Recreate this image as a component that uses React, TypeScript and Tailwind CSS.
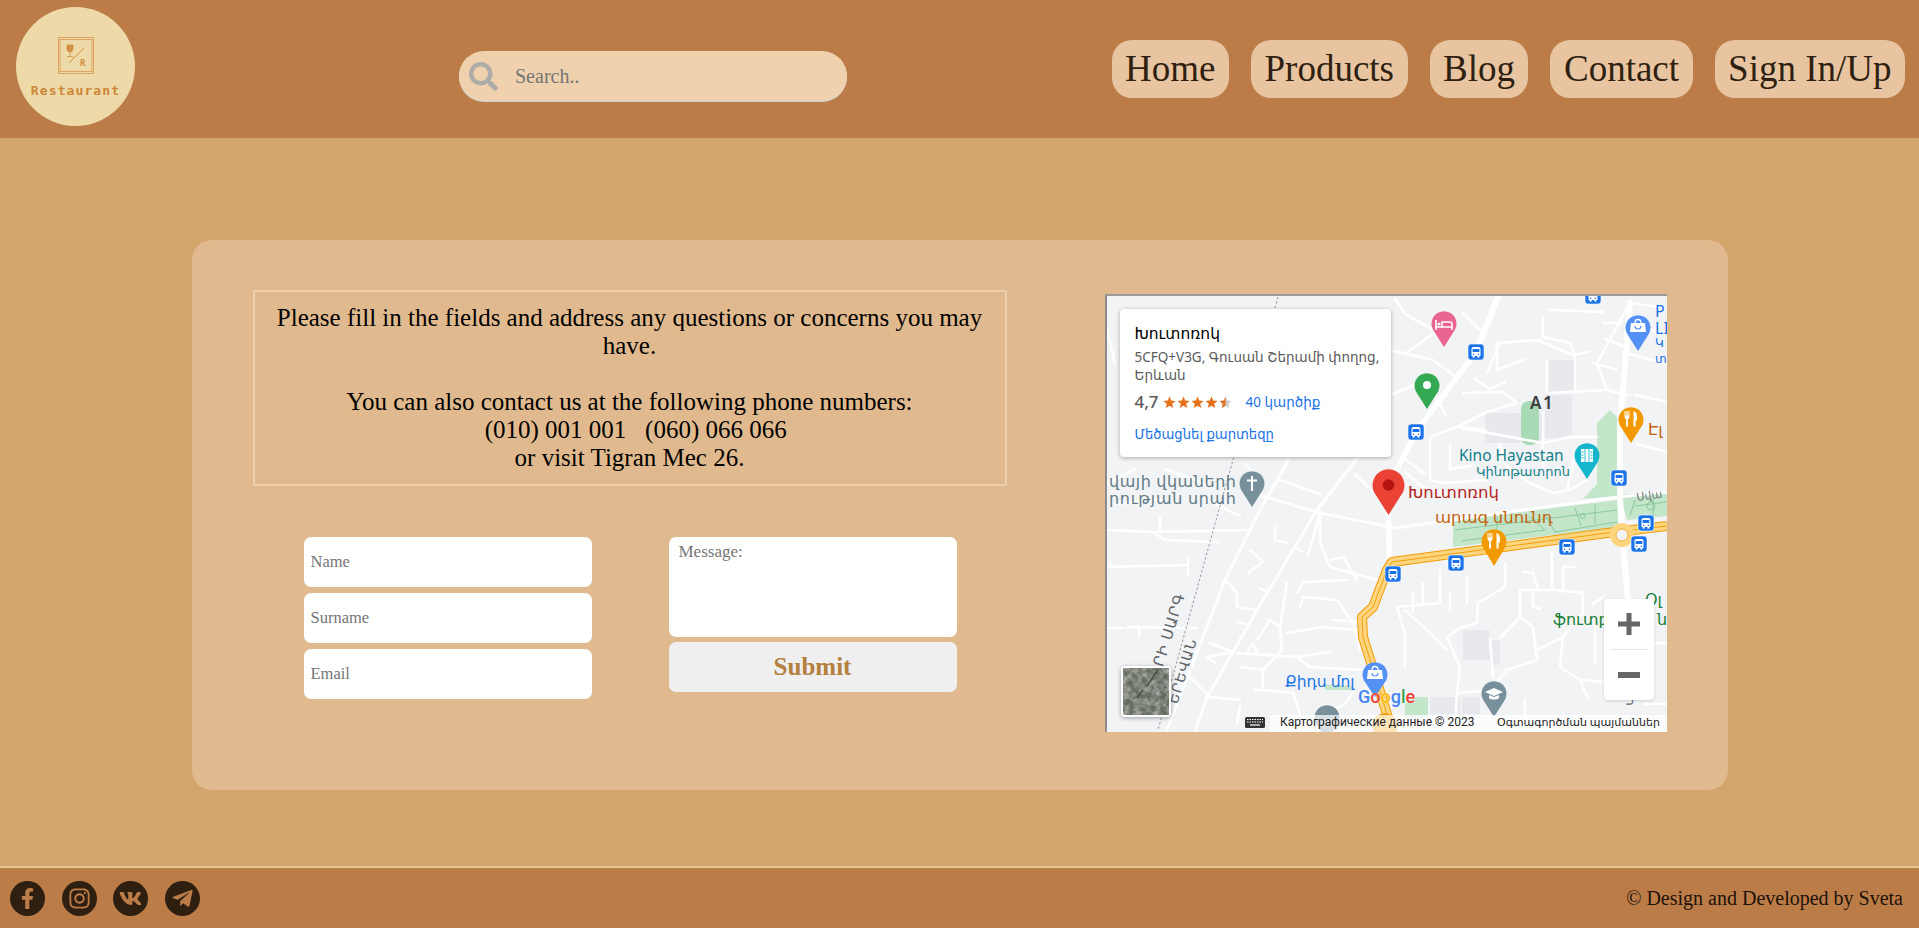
import { FaFacebookF, FaInstagram, FaSearch, FaTelegramPlane, FaVk } from 'react-icons/fa';

const navItems = ['Home', 'Products', 'Blog', 'Contact', 'Sign In/Up'];

// local map coordinates, 562x438 frame
const thinRoads = [
  '2,236 48,238 145,236', '48,238 60,246 113,248', '55,223 55,238', '2,273 83,271', '83,263 83,281', '5,268 5,273',
  '2,334 18,334', '22,333 92,334', '34,334 34,343', '120,286 132,299 132,313 152,316', '133,328 145,331',
  '155,294 162,298', '170,233 170,246 182,249', '192,254 197,258', '145,256 158,268 143,279',
  '105,349 128,358 102,363 110,369', '135,373 158,376', '215,216 215,249 225,273 272,286', '225,266 238,263 252,286',
  '182,289 175,333 177,356 158,376 158,396 188,399 198,429', '192,299 198,288 242,286',
  '195,313 198,303 232,306 248,329 255,356', '182,339 218,333 252,336', '228,326 252,328', '152,346 165,326 175,333',
  '142,359 148,349 152,359', '132,359 192,363 225,358', '192,363 205,373 258,376', '85,383 105,403 135,406',
  '135,412 132,430', '150,396 158,396', '198,429 240,410 250,395',
  '335,276 335,309 292,313', '400,269 400,293 373,309 372,329 355,334 342,343 355,373 352,399',
  '415,296 448,296 478,299 478,319 458,343 432,356', '415,296 415,323 395,344', '415,323 428,333 432,366 402,376',
  '428,299 428,313 435,315', '447,259 447,296', '458,296 458,273 470,273', '418,278 428,279 433,296',
  '458,343 455,373 475,386 482,403', '402,376 385,396 355,399', '475,386 518,389', '532,349 562,349', '385,344 388,383',
  '318,289 318,309', '300,316 322,336 342,356', '292,313 300,340 300,372', '352,399 350,436', '420,405 420,436',
  '488,310 498,303', '490,330 490,370', '540,410 562,410', '362,283 362,309', '345,300 345,316', '308,300 308,318',
  '382,79 395,49 432,46 468,61 483,58', '392,49 392,76 418,66', '438,23 438,43 465,49 470,61 470,96', '445,16 498,18',
  '285,56 328,66 348,81', '358,19 375,36', '358,99 398,98 412,109 382,118 352,133 380,136', '442,66 442,99',
  '442,99 502,96 522,101', '502,96 492,69 525,9', '488,69 512,76', '498,29 515,29', '500,45 518,52',
  '325,143 352,133 438,149 465,143 492,143', '438,119 438,179', '325,143 325,186 338,189 382,186',
  '425,189 448,199 465,196 482,186', '470,160 462,196', '525,9 562,14', '530,101 562,108', '532,150 562,158 562,190',
  '215,219 291,234', '150,200 215,219', '215,219 203,262', '250,180 270,200', '2,190 30,175', '60,175 100,190',
  '10,210 60,205', '100,205 135,222', '300,165 320,180', '140,170 150,180', '172,185 215,200', '2,35 10,70',
  '290,5 300,20 345,45', '300,60 335,35', '288,100 330,82', '330,100 340,120', '400,170 425,189',
  '370,85 385,95 400,88', '345,150 345,175 365,172', '300,178 320,195', '395,150 400,170', '525,60 562,70', '535,30 555,40',
];
const majorRoads = ['395,-2 371,58 311,138 292,176', '283,215 285,275', '525,9 515,132 515,204 518,250 523,306'];
const longRoads = ['184,165 155,216 120,286 62,436', '253,163 212,216 152,316 102,403 90,438', '291,234 513,203 562,198'];

const buildings = [
  'M442 66h28v32h-28z', 'M380 119h58v30h-58z', 'M440 101h27v43h-27z', 'M358 336h27v30h-27z', 'M385 346h10v25h-10z',
  'M325 403h30v17h-30z', 'M357 403h18v17h-18z',
];

const busStops = [
  [371, 58], [311, 138], [514, 184], [488, 2], [541, 229], [534, 250], [462, 253], [351, 269], [288, 280],
];

function Pin({ x, top, tip, r, fill, children }: { x: number; top: number; tip: number; r: number; fill: string; children?: React.ReactNode }) {
  return (
    <g>
      <path d={`M${x} ${tip}L${x - r * 0.9} ${top + r * 1.45}A${r} ${r} 0 1 1 ${x + r * 0.9} ${top + r * 1.45}Z`} fill={fill} />
      {children}
    </g>
  );
}

function Bus({ x, y }: { x: number; y: number }) {
  return (
    <g transform={`translate(${x - 8} ${y - 8})`}>
      <rect width="16" height="16" rx="3" fill="#1a73e8" stroke="#fff" strokeWidth="0.6" />
      <path d="M3.5 5a2 2 0 0 1 2-2h5a2 2 0 0 1 2 2v7h-9z" fill="#fff" />
      <rect x="4.6" y="5" width="6.8" height="3" fill="#1a73e8" />
      <rect x="4.6" y="12" width="2" height="1.6" fill="#fff" />
      <rect x="9.4" y="12" width="2" height="1.6" fill="#fff" />
      <circle cx="5.6" cy="10.2" r="0.8" fill="#1a73e8" />
      <circle cx="10.4" cy="10.2" r="0.8" fill="#1a73e8" />
    </g>
  );
}

function Fork({ x, y }: { x: number; y: number }) {
  return (
    <g fill="#fff" transform={`translate(${x} ${y})`}>
      <path d="M-6.5 -8v5.5c0 1.4.7 2.2 1.6 2.5V7.5h1.8V0c.9-.3 1.6-1.1 1.6-2.5V-8h-1v4.5h-.9V-8h-1.2v4.5h-.9V-8z" />
      <path d="M2.5 -8c2.3.6 3.5 3 3.5 5.5V1.5H4.6V7.5H2.5z" />
    </g>
  );
}

function MapCanvas() {
  return (
    <svg width="562" height="438" viewBox="0 0 562 438" className="block font-['Noto_Sans','DejaVu_Sans',sans-serif]">
      <rect width="562" height="438" fill="#f2f3f5" />
      {buildings.map((d) => (
        <path key={d} d={d} fill="#e8e9ec" />
      ))}
      {/* parks */}
      <rect x="416" y="107" width="18" height="44" rx="8" fill="#a8dab5" />
      <path d="M492 129L505 116L515 126V202L478 205L492 190Z" fill="#c3e6cb" />
      <path d="M348 226L513 206V233L348 253Z" fill="#c3e6cb" />
      <path d="M515 200H562V222L522 226Z" fill="#c3e6cb" />
      <path d="M300 424H323V403H311L300 410Z" fill="#c3e6cb" />
      <path d="M220 396H248V392L220 390Z" fill="#c3e6cb" />
      <g stroke="#7cc296" strokeWidth="0.8" fill="none">
        <path d="M350 236L512 216M356 247L440 236L424 222M392 222V248M440 220L450 238L512 228M470 214L476 232M490 210V230" />
        <circle cx="478" cy="222" r="2.5" />
        <path d="M530 206L525 222M530 212L562 208M548 205V222" />
        <circle cx="546" cy="212" r="4" />
      </g>
      {/* roads */}
      <g fill="none" stroke="#fff" strokeLinejoin="round" strokeLinecap="round">
        {thinRoads.map((p) => (
          <polyline key={p} points={p} strokeWidth="2.6" />
        ))}
        {longRoads.map((p) => (
          <polyline key={p} points={p} strokeWidth="3" />
        ))}
        {majorRoads.map((p) => (
          <polyline key={p} points={p} strokeWidth="6" />
        ))}
      </g>
      <polyline points="173,3 128,166 113,219 53,436" fill="none" stroke="#8a8f94" strokeWidth="0.9" strokeDasharray="2.5 2" />
      {/* highway */}
      <g fill="none" strokeLinejoin="round">
        <polyline points="285,430 258,343 257,323 268,313 282,276 287,268 502,239 562,232" stroke="#f29900" strokeWidth="10" />
        <polyline points="285,430 258,343 257,323 268,313 282,276 287,268 502,239 562,232" stroke="#fdd57e" strokeWidth="8" />
        <polyline points="285,430 258,343 257,323 268,313 282,276 287,268 502,239 562,232" stroke="#f29900" strokeWidth="0.9" />
        <circle cx="517" cy="241" r="9" stroke="#fdd57e" strokeWidth="6" fill="#f2f3f5" />
        <circle cx="517" cy="241" r="6" stroke="#f29900" strokeWidth="0.7" />
      </g>
      {/* labels */}
      <g fontSize="15" fontFamily="'Noto Sans', 'DejaVu Sans', sans-serif">
        <text x="4" y="193" fill="#5f7a86" fontSize="16" textLength="127">վայի վկաների</text>
        <text x="4" y="210" fill="#5f7a86" fontSize="16" textLength="127">րության սրահ</text>
        <text x="425" y="115" fill="#3c4043" fontSize="17" fontWeight="600" letterSpacing="1.5">A1</text>
        <text x="354" y="167" fill="#12808a" fontSize="15.5">Kino Hayastan</text>
        <text x="371" y="182" fill="#12808a" fontSize="13">Կինոթատրոն</text>
        <text x="303" y="204" fill="#b3261e" fontSize="16.5">Խուտոռոկ</text>
        <text x="330" y="229" fill="#c5640f" fontSize="16.5">արագ սնունդ</text>
        <text x="543" y="141" fill="#c5640f" fontSize="16">Էլ</text>
        <text x="550" y="23" fill="#1a73e8" fontSize="16">P</text>
        <text x="550" y="40" fill="#1a73e8" fontSize="16">LI</text>
        <text x="550" y="53" fill="#1a73e8" fontSize="12">Կ</text>
        <text x="550" y="69" fill="#1a73e8" fontSize="12">տ</text>
        <text x="0" y="0" fill="#70757a" fontSize="11" transform="translate(532 207) rotate(-8)">Սվա</text>
        <text x="448" y="331" fill="#188038" fontSize="16">ֆուտբոլ</text>
        <text x="540" y="311" fill="#188038" fontSize="16">Օլ</text>
        <text x="552" y="331" fill="#188038" fontSize="16">ն</text>
        <text x="180" y="393" fill="#1a73e8" fontSize="15.5">Քիդս մոլ</text>
        <text x="0" y="0" fill="#5f6368" fontSize="15" letterSpacing="1" textAnchor="end" transform="translate(80 301) rotate(-73)">ՐԻ ՍԱՐԳ</text>
        <text x="0" y="0" fill="#5f6368" fontSize="14" letterSpacing="1" textAnchor="end" transform="translate(92 346) rotate(-73)">ԵՐԵՎԱՆ</text>
        <text x="0" y="0" fill="#5f6368" fontSize="12" transform="translate(530 412) rotate(-88)">Կ</text>
      </g>
      {busStops.map(([x, y]) => (
        <Bus key={`${x}-${y}`} x={x} y={y} />
      ))}
      {/* pins */}
      <Pin x={339} top={17} tip={53} r={12.5} fill="#ea6491">
        <path d="M331 26v10M331 33h16v3M347 33v-3a2 2 0 0 0-2-2h-8v5" stroke="#fff" strokeWidth="1.6" fill="none" />
        <circle cx="334" cy="30" r="1.6" fill="#fff" />
      </Pin>
      <Pin x={322} top={79} tip={115} r={12.5} fill="#34a853">
        <circle cx="322" cy="91" r="4" fill="#fff" />
      </Pin>
      <Pin x={533} top={21} tip={57} r={12.5} fill="#5491f5">
        <path d="M526 29h14l1 9h-16z" fill="#fff" />
        <path d="M530 29a3 3.5 0 0 1 6 0" stroke="#fff" strokeWidth="1.3" fill="none" />
        <path d="M530 32a3 3 0 0 0 6 0" stroke="#5491f5" strokeWidth="1.2" fill="none" />
      </Pin>
      <Pin x={526} top={113} tip={149} r={12.5} fill="#f29900">
        <Fork x={526} y={125} />
      </Pin>
      <Pin x={482} top={149} tip={185} r={12.5} fill="#12b5cb">
        <rect x="476" y="155" width="12" height="13" fill="#fff" />
        <path d="M480 155v13M484 155v13" stroke="#12b5cb" strokeWidth="0.9" />
        <path d="M476.5 158h2M476.5 161h2M476.5 164h2M485.5 158h2M485.5 161h2M485.5 164h2" stroke="#12b5cb" strokeWidth="1" />
      </Pin>
      <Pin x={147} top={177} tip={213} r={12.5} fill="#78909c">
        <path d="M147 182v15M142 186.5h10" stroke="#fff" strokeWidth="2" />
      </Pin>
      <Pin x={389} top={235} tip={272} r={12.5} fill="#f29900">
        <Fork x={389} y={247} />
      </Pin>
      <Pin x={270} top={368} tip={403} r={12.5} fill="#5491f5">
        <path d="M263 376h14l1 9h-16z" fill="#fff" />
        <path d="M267 376a3 3.5 0 0 1 6 0" stroke="#fff" strokeWidth="1.3" fill="none" />
        <path d="M267 379a3 3 0 0 0 6 0" stroke="#5491f5" strokeWidth="1.2" fill="none" />
      </Pin>
      <Pin x={389} top={387} tip={423} r={12.5} fill="#78909c">
        <path d="M380 398l9-4 9 4-9 4z" fill="#fff" />
        <path d="M384 401v3c2 2 8 2 10 0v-3l-5 2z" fill="#fff" />
      </Pin>
      <Pin x={222} top={411} tip={447} r={12.5} fill="#78909c" />
      <Pin x={280} top={419} tip={455} r={12.5} fill="#f29900" />
      <Pin x={283.5} top={175} tip={221} r={16} fill="#ea4335">
        <circle cx="283.5" cy="191" r="5.8" fill="#b31412" />
      </Pin>
      {/* google mark */}
      <text x="253" y="409" fontSize="18" fontWeight="500" fontFamily="'Roboto', sans-serif" stroke="#fff" strokeWidth="0.3" paintOrder="stroke">
        <tspan fill="#4285f4">G</tspan>
        <tspan fill="#ea4335">o</tspan>
        <tspan fill="#fbbc05">o</tspan>
        <tspan fill="#4285f4">g</tspan>
        <tspan fill="#34a853">l</tspan>
        <tspan fill="#ea4335">e</tspan>
      </text>
      {/* attribution */}
      <rect x="165" y="421" width="397" height="17" fill="#fff" fillOpacity="0.72" />
      <g fill="#333">
        <rect x="140" y="423" width="20" height="11" rx="1.5" />
      </g>
      <path d="M142 425.5h16M142 428h16" stroke="#fff" strokeWidth="1" strokeDasharray="1.5 1" />
      <path d="M145 431h10" stroke="#fff" strokeWidth="1.2" />
      <text x="175" y="432" fontSize="12" fill="#222" fontFamily="'Roboto', sans-serif">Картографические данные © 2023</text>
      <text x="392" y="432" fontSize="11" fill="#222">Օգտագործման պայմաններ</text>
    </svg>
  );
}

function Stars() {
  const star = 'M6.5 0.5L8.2 4.6L12.6 4.9L9.2 7.8L10.3 12.1L6.5 9.8L2.7 12.1L3.8 7.8L0.4 4.9L4.8 4.6Z';
  return (
    <svg width="70" height="13" viewBox="0 0 70 13">
      <defs>
        <clipPath id="half-star">
          <rect x="0" y="0" width="6.5" height="13" />
        </clipPath>
      </defs>
      {[0, 14, 28, 42].map((x) => (
        <path key={x} d={star} fill="#e7711b" transform={`translate(${x} 0)`} />
      ))}
      <g transform="translate(56 0)">
        <path d={star} fill="#ccc" />
        <path d={star} fill="#e7711b" clipPath="url(#half-star)" />
      </g>
    </svg>
  );
}

function SatelliteThumb() {
  return (
    <svg width="46" height="47" viewBox="0 0 46 47" className="block">
      <filter id="sat-noise">
        <feTurbulence type="fractalNoise" baseFrequency="0.16" numOctaves="3" seed="7" />
        <feColorMatrix values="0 0 0 0 0.6  0 0 0 0 0.6  0 0 0 0 0.56  1.5 0 0 0 -0.5" />
      </filter>
      <rect width="46" height="47" fill="#646b61" />
      <rect width="46" height="47" filter="url(#sat-noise)" />
      <path d="M34 3L24 18M20 22L14 30" stroke="#474e45" strokeWidth="1.5" fill="none" />
    </svg>
  );
}

function MapFrame() {
  return (
    <div className="relative mt-1 h-[438px] w-[562px] shrink-0 overflow-hidden border-t-2 border-l-2 border-t-[#9a9a9a] border-l-[#8d8d8d] font-['Noto_Sans','DejaVu_Sans',sans-serif]">
      <div className="-mt-0.5 -ml-0.5">
        <MapCanvas />
      </div>
      {/* place card */}
      <div className="absolute top-[13px] left-[13px] h-[148px] w-[271px] rounded-sm bg-white pt-[14px] pr-[6px] pl-[15px] shadow-[0_1px_4px_rgba(0,0,0,0.3)]">
        <p className="text-[15.5px] leading-[20px] font-medium text-black">Խուտոռոկ</p>
        <p className="mt-[5px] text-[13.5px] leading-[18px] text-[#5b5b5b]">5CFQ+V3G, Գուսան Շերամի փողոց, Երևան</p>
        <div className="mt-[7px] flex h-[22px] items-center">
          <span className="text-[17px] font-medium text-[#5b5b5b]">4,7</span>
          <span className="ml-[4px] flex">
            <Stars />
          </span>
          <span className="ml-[13px] text-[13.5px] text-[#1a73e8]">40 կարծիք</span>
        </div>
        <p className="mt-[12px] text-[13.2px] leading-[18px] text-[#1a73e8]">Մեծացնել քարտեզը</p>
      </div>
      {/* satellite toggle */}
      <div className="absolute top-[370px] left-[14px] rounded-sm border-2 border-white shadow-[0_1px_4px_rgba(0,0,0,0.35)]">
        <SatelliteThumb />
      </div>
      {/* zoom controls */}
      <div className="absolute top-[303px] left-[497px] flex h-[101px] w-[50px] flex-col items-center rounded-sm bg-white shadow-[0_1px_3px_rgba(0,0,0,0.15)]">
        <div className="flex h-1/2 items-center justify-center">
          <svg width="24" height="24" viewBox="0 0 24 24">
            <path d="M9.5 1h5v8.5H23v5h-8.5V23h-5v-8.5H1v-5h8.5z" fill="#666" />
          </svg>
        </div>
        <div className="h-px w-[37px] bg-[#e6e6e6]" />
        <div className="flex h-1/2 items-center justify-center">
          <svg width="24" height="8" viewBox="0 0 24 8">
            <rect x="1" y="1" width="22" height="6" fill="#666" />
          </svg>
        </div>
      </div>
    </div>
  );
}

function Logo() {
  return (
    <div className="mb-[5px] flex h-[119px] w-[119px] shrink-0 flex-col items-center rounded-full bg-[#eedaa8] pt-[30px]">
      <svg width="36" height="37" viewBox="0 0 36 37">
        <rect x="0.5" y="0.5" width="35" height="36" fill="none" stroke="#dda55f" strokeWidth="1" />
        <rect x="2" y="2.5" width="32" height="32" fill="none" stroke="#dda55f" strokeWidth="1" />
        <path d="M9 8h6v4a3 3 0 0 1-6 0zM12 15v4M9 19.5h6" fill="#d28f45" stroke="#d28f45" strokeWidth="0.8" />
        <path d="M26 11L11 26" stroke="#d28f45" strokeWidth="1" />
        <text x="22" y="29" fontSize="9" fontWeight="700" fill="#d28f45" fontFamily="'DejaVu Sans Mono', monospace">R</text>
      </svg>
      <span className="mt-[8px] font-['DejaVu_Sans_Mono',monospace] text-[13px] leading-[18px] font-bold tracking-[1.1px] text-[#cd8638]">
        Restaurant
      </span>
    </div>
  );
}

const socialIcons = [
  { Icon: FaFacebookF, size: 'h-[21px] w-[21px]' },
  { Icon: FaInstagram, size: 'h-[23px] w-[23px]' },
  { Icon: FaVk, size: 'h-[23px] w-[23px]' },
  { Icon: FaTelegramPlane, size: 'h-[23px] w-[23px]' },
];

export default function App() {
  return (
    <div className="flex h-[928px] w-full flex-col overflow-hidden bg-[#d2a56d] font-['Liberation_Serif',serif] text-black">
      <header className="flex h-[138px] shrink-0 items-center bg-[#bc7c48] pr-[14px] pl-4">
        <Logo />
        <div className="mt-[14px] ml-[324px] flex h-[50px] w-[388px] items-center rounded-[25px] bg-[#f0d1ad] pl-[10px] shadow-[0_1px_0_#c9d3d8]">
          <FaSearch className="h-[29px] w-[29px] text-[#aeaca8]" />
          <input
            placeholder="Search.."
            className="ml-[17px] min-w-0 flex-1 bg-transparent text-[20px] outline-none placeholder:text-[#757575]"
          />
        </div>
        <nav className="ml-auto flex gap-[22px]">
          {navItems.map((item) => (
            <a key={item} className="flex h-[58px] items-center rounded-[20px] bg-[#e8c5a0] px-[13.5px] text-[37px] text-[#2f1f11]">
              {item}
            </a>
          ))}
        </nav>
      </header>

      <main className="flex-1 pt-[102px]">
        <section className="mx-auto flex h-[550px] w-[1536px] gap-[98px] rounded-[20px] bg-[#e0ba8e] pt-[50px] pl-[61px]">
          <div className="w-[754px] shrink-0">
            <div className="border-2 border-[#ebcfae] px-4 py-[12px] text-center text-[25px] leading-[28px]">
              <p>Please fill in the fields and address any questions or concerns you may have.</p>
              <p className="mt-[28px]">You can also contact us at the following phone numbers:</p>
              <p>&nbsp;&nbsp;(010) 001 001 &nbsp; (060) 066 066</p>
              <p>or visit Tigran Mec 26.</p>
            </div>
            <form className="mt-[51px] flex gap-[77px] pl-[51px]">
              <div className="flex w-[288px] flex-col gap-[6px]">
                {['Name', 'Surname', 'Email'].map((name) => (
                  <input
                    key={name}
                    placeholder={name}
                    className="h-[50px] rounded-[7px] bg-white px-[7px] text-[16.5px] outline-none placeholder:text-[#757575]"
                  />
                ))}
              </div>
              <div className="flex w-[288px] flex-col gap-[5px]">
                <textarea
                  placeholder="Message:"
                  className="h-[100px] resize-none rounded-[7px] bg-white px-[10px] py-[6px] text-[17px] leading-[18px] outline-none placeholder:text-[#757575]"
                />
                <button type="button" className="h-[50px] rounded-[7px] bg-[#efefef] text-[25px] font-bold text-[#b57f3f]">
                  Submit
                </button>
              </div>
            </form>
          </div>
          <MapFrame />
        </section>
      </main>

      <footer className="flex h-[62px] shrink-0 items-center justify-between border-t-2 border-[#e8c796] bg-[#bc7c48] pr-[16px] pl-[10px]">
        <div className="flex gap-[16.5px]">
          {socialIcons.map(({ Icon, size }, i) => (
            <a key={i} className="flex h-[35px] w-[35px] items-center justify-center rounded-full bg-[#2f1f11] text-[#bc7c48]">
              <Icon className={size} />
            </a>
          ))}
        </div>
        <p className="text-[20px] text-[#1d120a]">© Design and Developed by Sveta</p>
      </footer>
    </div>
  );
}
